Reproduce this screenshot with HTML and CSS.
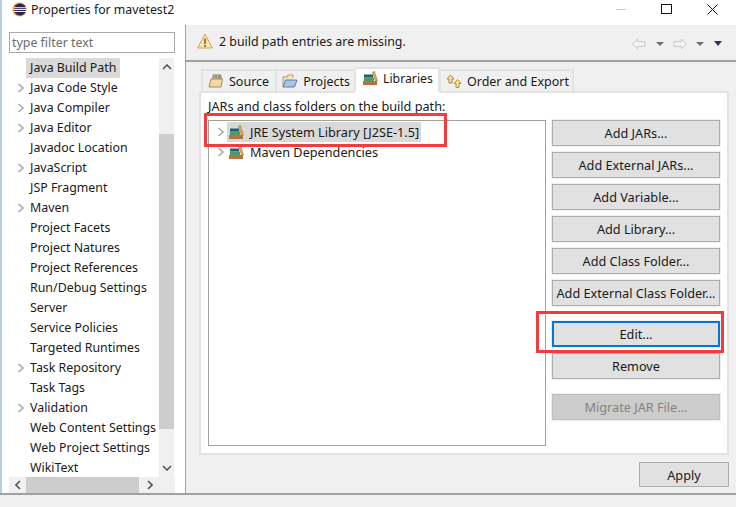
FILE: index.html
```html
<!DOCTYPE html>
<html lang="en">
<head>
<meta charset="utf-8">
<title>Properties for mavetest2</title>
<link rel="stylesheet" href="styles.css">
</head>
<body>
<svg class="defs" width="0" height="0">
  <defs>
    <symbol id="books" viewBox="0 0 16 14">
      <rect x="1" y="10" width="14" height="4" fill="#b8713f"/>
      <rect x="2" y="6.5" width="10" height="3.5" fill="#4f9a6a"/>
      <rect x="2" y="3.5" width="9" height="3" fill="#1f5f78"/>
      <path d="M10.5 1 L12.5 0.5 L15.5 10 L13.5 10 Z" fill="#e8b04a" stroke="#a9772a" stroke-width=".6"/>
    </symbol>
    <symbol id="chev" viewBox="0 0 8 10">
      <path d="M1.5 1 L6 5 L1.5 9" fill="none" stroke="#a9a9a9" stroke-width="1.6"/>
    </symbol>
  </defs>
</svg>
<div class="window">
  <header class="titlebar">
    <svg class="app-icon" viewBox="0 0 16 16" width="15" height="15">
      <circle cx="8" cy="8" r="7.5" fill="#f09a2a"/>
      <circle cx="8.6" cy="8" r="6.4" fill="#2c2255"/>
      <rect x="2" y="5.6" width="13" height="1" fill="#fff"/>
      <rect x="2" y="7.6" width="13" height="1" fill="#fff"/>
      <rect x="2" y="9.6" width="13" height="1" fill="#fff"/>
    </svg>
    <span class="title">Properties for mavetest2</span>
    <div class="win-controls">
      <span class="win-min"></span>
      <span class="win-max"></span>
      <svg class="win-close" viewBox="0 0 11 11" width="11" height="11"><path d="M.5 .5 L10.5 10.5 M10.5 .5 L.5 10.5" stroke="#111" stroke-width="1" fill="none"/></svg>
    </div>
  </header>
  <div class="main">
    <aside class="sidebar">
      <div class="filter">type filter text</div>
      <div class="tree-wrap">
        <ul class="tree">
          <li class="node"><span class="node-label selected">Java Build Path</span></li>
          <li class="node has-kids"><svg class="chev"><use href="#chev"/></svg><span class="node-label">Java Code Style</span></li>
          <li class="node has-kids"><svg class="chev"><use href="#chev"/></svg><span class="node-label">Java Compiler</span></li>
          <li class="node has-kids"><svg class="chev"><use href="#chev"/></svg><span class="node-label">Java Editor</span></li>
          <li class="node"><span class="node-label">Javadoc Location</span></li>
          <li class="node has-kids"><svg class="chev"><use href="#chev"/></svg><span class="node-label">JavaScript</span></li>
          <li class="node"><span class="node-label">JSP Fragment</span></li>
          <li class="node has-kids"><svg class="chev"><use href="#chev"/></svg><span class="node-label">Maven</span></li>
          <li class="node"><span class="node-label">Project Facets</span></li>
          <li class="node"><span class="node-label">Project Natures</span></li>
          <li class="node"><span class="node-label">Project References</span></li>
          <li class="node"><span class="node-label">Run/Debug Settings</span></li>
          <li class="node"><span class="node-label">Server</span></li>
          <li class="node"><span class="node-label">Service Policies</span></li>
          <li class="node"><span class="node-label">Targeted Runtimes</span></li>
          <li class="node has-kids"><svg class="chev"><use href="#chev"/></svg><span class="node-label">Task Repository</span></li>
          <li class="node"><span class="node-label">Task Tags</span></li>
          <li class="node has-kids"><svg class="chev"><use href="#chev"/></svg><span class="node-label">Validation</span></li>
          <li class="node"><span class="node-label">Web Content Settings</span></li>
          <li class="node"><span class="node-label">Web Project Settings</span></li>
          <li class="node"><span class="node-label">WikiText</span></li>
        </ul>
        <div class="vscroll">
          <svg class="sb-arrow" viewBox="0 0 10 6" width="10" height="6"><path d="M1 5 L5 1 L9 5" fill="none" stroke="#555" stroke-width="1.6"/></svg>
          <div class="vtrack"><div class="vthumb"></div></div>
          <svg class="sb-arrow" viewBox="0 0 10 6" width="10" height="6"><path d="M1 1 L5 5 L9 1" fill="none" stroke="#555" stroke-width="1.6"/></svg>
        </div>
      </div>
      <div class="hscroll">
        <svg class="sb-arrow" viewBox="0 0 6 10" width="6" height="10"><path d="M5 1 L1 5 L5 9" fill="none" stroke="#555" stroke-width="1.6"/></svg>
        <div class="hthumb"></div>
        <svg class="sb-arrow" viewBox="0 0 6 10" width="6" height="10"><path d="M1 1 L5 5 L1 9" fill="none" stroke="#555" stroke-width="1.6"/></svg>
      </div>
    </aside>
    <section class="content">
      <div class="msgbar">
        <svg class="warn" viewBox="0 0 16 16" width="16" height="16">
          <path d="M8 1 L15.3 15 L.7 15 Z" fill="#fbe5a8" stroke="#c9a667" stroke-width="1" stroke-linejoin="round"/>
          <rect x="7" y="5.5" width="2" height="5.5" fill="#a8783a"/>
          <rect x="7" y="12" width="2" height="2" fill="#a8783a"/>
        </svg>
        <span class="msg">2 build path entries are missing.</span>
        <div class="nav">
          <svg class="nav-back" viewBox="0 0 15 12" width="14" height="12"><path d="M.7 6 L6 .7 V3.5 H14 V8.5 H6 V11.3 Z" fill="#f4f4f4" stroke="#c4c4c4"/></svg>
          <span class="tri"></span>
          <svg viewBox="0 0 15 12" width="14" height="12"><path d="M14.3 6 L9 .7 V3.5 H1 V8.5 H9 V11.3 Z" fill="#f4f4f4" stroke="#c4c4c4"/></svg>
          <span class="tri"></span>
          <span class="tri tri-dark"></span>
        </div>
      </div>
      <div class="page">
        <div class="tabs">
          <div class="tab">
            <svg class="tab-icon" viewBox="0 0 16 14" width="16" height="14"><path d="M1 13 L3 5 H14.5 L13 13 Z" fill="#f3d9a4" stroke="#a98a4e"/><path d="M5 5 V1 H13 V5 M8 1 V5 M11 1 V5 M5 3 H13" fill="none" stroke="#6e5a3a" stroke-width=".8"/></svg>
            <span>Source</span>
          </div>
          <div class="tab">
            <svg class="tab-icon" viewBox="0 0 16 14" width="16" height="14"><path d="M1 13 V3 H5 L6 1 H11 V4" fill="#f6e7bd" stroke="#b09a5c"/><path d="M1 13 L3.5 6 H15 L12.5 13 Z" fill="#a8c4e6" stroke="#5c7fb0"/></svg>
            <span>Projects</span>
          </div>
          <div class="tab tab-active">
            <svg class="tab-icon" viewBox="0 0 16 14" width="16" height="14"><use href="#books"/></svg>
            <span>Libraries</span>
          </div>
          <div class="tab tab-last">
            <svg class="tab-icon" viewBox="0 0 16 14" width="16" height="14"><path d="M4.5 1 L8 5 H6 V9 H3 V5 H1 Z" fill="#f7e2a6" stroke="#a98a3a"/><path d="M11.5 13.5 L8 9.5 H10 V5.5 H13 V9.5 H15 Z" fill="#f7e2a6" stroke="#c98a20" transform="rotate(180 11.5 9.5)"/></svg>
            <span>Order and Export</span>
          </div>
        </div>
        <div class="tab-body">
          <div class="list-label">JARs and class folders on the build path:</div>
          <div class="lib-area">
            <div class="list">
              <div class="lib-row">
                <svg class="chev"><use href="#chev"/></svg>
                <span class="lib-sel">
                  <svg class="lib-icon"><use href="#books"/></svg>
                  <span>JRE System Library [J2SE-1.5]</span>
                </span>
              </div>
              <div class="lib-row">
                <svg class="chev"><use href="#chev"/></svg>
                <span class="lib-item">
                  <svg class="lib-icon"><use href="#books"/></svg>
                  <span>Maven Dependencies</span>
                </span>
              </div>
            </div>
            <div class="buttons">
              <button class="btn">Add JARs...</button>
              <button class="btn">Add External JARs...</button>
              <button class="btn">Add Variable...</button>
              <button class="btn">Add Library...</button>
              <button class="btn">Add Class Folder...</button>
              <button class="btn">Add External Class Folder...</button>
              <button class="btn btn-focus">Edit...</button>
              <button class="btn">Remove</button>
              <button class="btn btn-disabled">Migrate JAR File...</button>
            </div>
          </div>
        </div>
        <div class="apply-row"><button class="btn btn-apply">Apply</button></div>
      </div>
    </section>
  </div>
  <footer class="status"></footer>
  <div class="mark mark-lib"></div>
  <div class="mark mark-edit"></div>
</div>
</body>
</html>
```
FILE: styles.css
```css
* { box-sizing: border-box; }
html, body { margin: 0; padding: 0; }
body {
  width: 736px;
  height: 507px;
  overflow: hidden;
  background: #fff;
  font-family: "Noto Sans", "Open Sans", sans-serif;
  font-size: 12.7px;
  color: #1a1a1a;
}
.defs { position: absolute; }
.window {
  position: relative;
  width: 736px;
  height: 507px;
  border-left: 2px solid #b9cde2;
  display: flex;
  flex-direction: column;
}
.titlebar {
  height: 25px;
  flex: none;
  display: flex;
  align-items: center;
  padding-left: 10px;
  background: #fff;
}
.app-icon { flex: none; margin-top: -6px; }
.title { margin-left: 4px; margin-top: -6px; font-size: 12.3px; }
.win-controls {
  margin-left: auto;
  display: flex;
  align-items: center;
  margin-top: -7px;
  padding-right: 18px;
}
.win-min { width: 10px; height: 1px; background: #c8c8c8; margin-right: 35px; }
.win-max { width: 11px; height: 10px; border: 1px solid #111; margin-right: 35px; }
.main { flex: 1; display: flex; min-height: 0; }
.sidebar {
  width: 184px;
  flex: none;
  height: 468px;
  border-right: 1px solid #a0a0a0;
  padding: 7px 0 0 7px;
  background: #fff;
  display: flex;
  flex-direction: column;
  font-size: 12.4px;
}
.filter {
  width: 166px;
  height: 21px;
  border: 1px solid #a9a9a9;
  padding-left: 2px;
  line-height: 19px;
  color: #6d6d6d;
  flex: none;
}
.tree-wrap { display: flex; width: 166px; height: 420px; margin-top: 4px; flex: none; }
.tree { list-style: none; margin: 0; padding: 1px 0 0; width: 149px; flex: none; overflow: hidden; }
.node { height: 20px; display: flex; align-items: center; padding-left: 21px; position: relative; white-space: nowrap; }
.node.has-kids { padding-left: 8px; }
.node.has-kids .chev { margin-right: 5px; }
.chev { width: 8px; height: 10px; flex: none; }
.node-label { padding: 0 4px 0 0; line-height: 20px; }
.selected { background: #d9d9d9; margin-left: -4px; padding-left: 4px; }
.vscroll { width: 15px; margin: 1px 0 0 1px; background: #f0f0f0; display: flex; flex-direction: column; align-items: center; flex: none; }
.vscroll .sb-arrow { margin: 6px 0; flex: none; }
.vtrack { flex: 1; width: 100%; padding-top: 58px; }
.vthumb { height: 295px; background: #cdcdcd; width: 100%; }
.hscroll { width: 166px; height: 16px; background: #f0f0f0; display: flex; align-items: center; flex: none; }
.hscroll .sb-arrow { margin: 0 6px; flex: none; }
.hthumb { width: 113px; height: 16px; background: #cdcdcd; margin: 0 2px 0 -1px; }
.content { flex: 1; background: #f0f0f0; height: 468px; display: flex; flex-direction: column; }
.msgbar {
  height: 37px;
  flex: none;
  border-bottom: 2px solid #a0a0a0;
  padding-bottom: 3px;
  display: flex;
  align-items: center;
  padding-left: 11px;
}
.msg { margin-left: 6px; font-size: 12.4px; }
.nav { margin-left: auto; display: flex; align-items: center; padding-right: 15px; margin-top: 5px; }
.nav-back { margin-right: 1px; }
.tri { width: 0; height: 0; border: 4px solid transparent; border-top: 4px solid #6e6e6e; border-bottom: 0; margin: 0 9px; }
.tri-dark { border-top-color: #3b2a6b; margin: 0 0 0 1px; border-width: 5px 4.5px 0; }
.page { flex: 1; display: flex; flex-direction: column; padding: 5px 8px 0 13px; }
.tabs { display: flex; height: 24px; align-items: flex-end; flex: none; padding-left: 2px; font-size: 12.5px; }
.tab {
  height: 22px;
  background: #f0f0f0;
  border: 2px solid #e3e3e3;
  border-bottom: 0;
  display: flex;
  align-items: center;
  padding: 0 6px 0 5px;
  margin-right: -2px;
  white-space: nowrap;
}
.tab-active {
  height: 26px;
  background: #fff;
  position: relative;
  z-index: 1;
  padding: 0 5px 4px 6px;
  margin: 0 -2px -2px -2px;
  border-bottom: 2px solid #fff;
  font-size: 12.3px;
}
.tab-last { padding-right: 3px; margin-left: 1px; }
.tab-icon { flex: none; margin-right: 5px; }
.tab-body {
  height: 364px;
  flex: none;
  background: #fff;
  border: 2px solid #e3e3e3;
  padding: 3px 7px 7px 7px;
  display: flex;
  flex-direction: column;
}
.list-label { line-height: 20px; height: 20px; margin-bottom: 4px; flex: none; }
.lib-area { display: flex; flex: 1; }
.list { width: 338px; height: 326px; border: 1px solid #a0a0a0; padding: 1px 0 0 8px; flex: none; }
.lib-row { height: 20px; display: flex; align-items: center; white-space: nowrap; }
.lib-row .chev { margin-right: 2px; }
.lib-sel, .lib-item { display: flex; align-items: center; height: 20px; }
.lib-sel { background: #d9d9d9; padding-right: 2px; }
.lib-icon { width: 16px; height: 14px; margin: 0 6px 0 1px; flex: none; }
.buttons { display: flex; flex-direction: column; gap: 6px; margin-left: 6px; width: 168px; flex: none; }
.btn {
  width: 168px;
  height: 26px;
  background: #e1e1e1;
  border: 1px solid #adadad;
  box-shadow: 0 0 0 1px #f0f0f0;
  font: inherit;
  color: inherit;
  padding: 0;
  flex: none;
}
.btn-focus { border: 2px solid #0078d7; margin-top: 9px; }
.btn-disabled { background: #cccccc; border-color: #bfbfbf; color: #838383; margin-top: 9px; }
.btn-apply { width: 90px; height: 25px; }
.apply-row { display: flex; justify-content: flex-end; padding-top: 7px; }
.status { height: 14px; flex: none; background: #f0f0f0; border-top: 2px solid #a0a0a0; margin-left: -2px; }
.mark { position: absolute; border: 3px solid #f33c3c; }
.mark-lib { left: 202px; top: 113px; width: 243px; height: 34px; }
.mark-edit { left: 534px; top: 311px; width: 188px; height: 42px; }
```
